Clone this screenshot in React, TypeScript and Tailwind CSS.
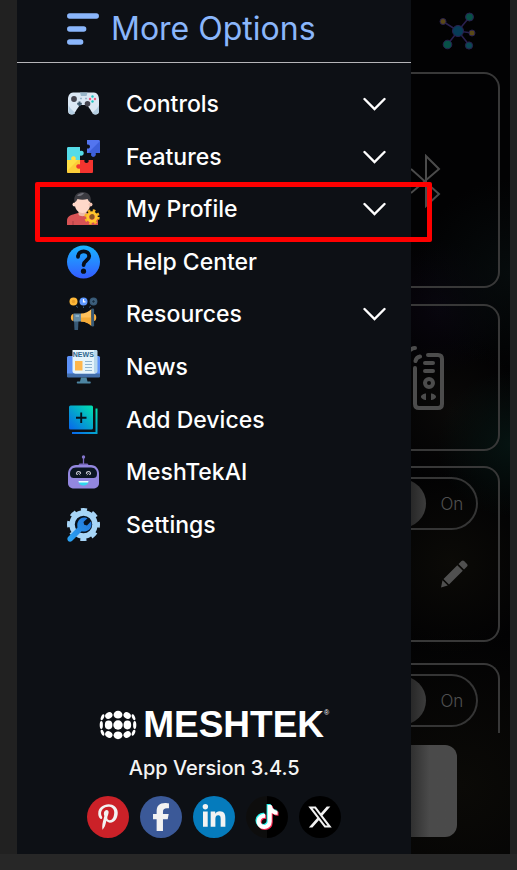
import type { ReactNode } from 'react';
import { FaFacebookF, FaLinkedinIn, FaPinterestP, FaTiktok, FaXTwitter } from 'react-icons/fa6';

const ControlsIcon = () => (
  <svg viewBox="0 0 35 34" className="h-[34px] w-[35px]" aria-hidden="true">
    <path d="M7 5.5h21c3 0 5 3 5 7v11c0 3-1.5 4-3.5 4-3 0-4-3.500-7-7.500-1-1.500-2-2-3-2h-4c-1 0-2 .5-3 2-3 4-4 7.500-7 7.500-2 0-3.500-1-3.500-4v-11c0-4 2-7 5-7Z" fill="#dbe8f4" />
    <path d="M2.500 18c2 5 4 4 6.500 8.500-1 .8-2 1-3 1-2 0-3.500-1-3.500-4ZM33 18c-2 5-4 4-6.500 8.500 1 .8 2 1 3 1 2 0 3.500-1 3.500-4Z" fill="#b4cee2" />
    <path d="M14 5.500h7.500l-1 3.500h-5.500Z" fill="#9bb8cc" />
    <circle cx="8" cy="12" r="2.900" fill="#45454f" />
    <circle cx="21.500" cy="16.700" r="2.800" fill="#45454f" />
    <path d="M13.500 14.500v4.600M11.200 16.800h4.600" stroke="#3f596d" strokeWidth="2" />
    <path d="M14 11.500h2M19 11.500h2" stroke="#96b4cc" strokeWidth="1.600" />
    <circle cx="26.500" cy="9.500" r="1.200" fill="#20c6c2" />
    <circle cx="26.500" cy="14.500" r="1.200" fill="#20c6c2" />
    <circle cx="24" cy="12" r="1.200" fill="#ef5b7c" />
    <circle cx="29" cy="12" r="1.200" fill="#ef5b7c" />
  </svg>
);

const FeaturesIcon = () => (
  <svg viewBox="0 0 35 34" className="h-[34px] w-[35px]" aria-hidden="true">
    <path d="M1 8.500c0-1 .5-1.500 1.500-1.500H14v4c5-2 5 6 0 4.500V20H1Z" fill="#55dce8" />
    <path d="M1 20h4.500c-2-5 6-5 4 0H14v13H2.500C1.500 33 1 32.500 1 31.500Z" fill="#ffe045" />
    <path d="M1 31 12 20h2v13H2.500C1.500 33 1 32.500 1 31.500Z" fill="#f9bd2e" opacity=".55" />
    <path d="M14 20h4.500c-1.500 4 5.500 4 4 0H27v11.500c0 1-.5 1.500-1.500 1.500H14v-4.500c-5 1.500-5-6 0-4Z" fill="#f4342f" />
    <path d="M21 0h11.500C33.500 0 34 .5 34 1.500V13h-4.500c1.500 5-6 5-4 0H21V8.500c4 1 4-5 0-4Z" fill="#5375ef" />
    <path d="M34 1v12h-4.500c1.500 5-6 5-4 0H22Z" fill="#3457d2" opacity=".7" />
  </svg>
);

const ProfileIcon = () => (
  <svg viewBox="0 0 35 34" className="h-[34px] w-[35px]" aria-hidden="true">
    <path d="M1 33v-4c0-4 3-6 6-6.500l5-1.500h9l5 1.500c4 .5 6 2.500 6 6.500v4Z" fill="#d75355" />
    <path d="M7 29v4M25 29v4" stroke="#a73d43" strokeWidth="1" />
    <path d="M12.500 17h8v5c0 3-8 3-8 0Z" fill="#eebba8" />
    <path d="M9 7h15v6c0 4-3 8-7.500 8S9 17 9 13Z" fill="#ffd8c9" />
    <circle cx="8.500" cy="12.500" r="2" fill="#ffd8c9" />
    <circle cx="24.500" cy="12.500" r="2" fill="#f3c4b3" />
    <path d="M8.500 10C7 4 11 0 16.500 0S26 4 24.500 10c-2 0-2-2-3-3-3 1-7 1-10 0-1 1-1 3-3 3Z" fill="#3b3b41" />
    <path d="M11 3.500c2-2 5-2.500 7-2.500-1 2-4 4-7 2.500Z" fill="#707078" />
    <circle cx="26" cy="25" r="6.300" fill="none" stroke="#f9b522" strokeWidth="2.800" strokeDasharray="2.500 2.450" />
    <circle cx="26" cy="25" r="4.300" fill="none" stroke="#ffc72e" strokeWidth="3" />
    <circle cx="26" cy="25" r="2.400" fill="#875622" />
  </svg>
);

const HelpIcon = () => (
  <svg viewBox="0 0 35 34" className="h-[34px] w-[35px]" aria-hidden="true">
    <defs>
      <linearGradient id="help" x1="0" x2="0" y1="0" y2="1">
        <stop stopColor="#18b5ff" />
        <stop offset="1" stopColor="#345bff" />
      </linearGradient>
    </defs>
    <circle cx="17.500" cy="17" r="16.500" fill="url(#help)" />
    <path d="M12 11.800c0-7.300 11.200-7 11.200-.5 0 4.200-5.600 4.400-5.600 8.700" fill="none" stroke="#080e18" strokeWidth="3.800" strokeLinecap="round" />
    <circle cx="17.500" cy="26.200" r="2.600" fill="#080e18" />
  </svg>
);

const ResourcesIcon = () => (
  <svg viewBox="0 0 35 34" className="h-[34px] w-[35px]" aria-hidden="true">
    <circle cx="7.500" cy="4.500" r="4" fill="#ffb939" />
    <circle cx="7.500" cy="4.500" r="1.700" fill="#eca028" />
    <circle cx="17.500" cy="4.500" r="4" fill="#5f98ff" />
    <path d="M17.500 2v2.800h2" fill="none" stroke="#fff" strokeWidth="1.200" />
    <circle cx="27.500" cy="4.500" r="3.900" fill="#385a77" />
    <circle cx="27.500" cy="4.500" r="1.700" fill="#172d41" stroke="#547996" strokeWidth=".7" />
    <path d="m10 9 2 1.500M17.500 9.500V11M25 9l-2 1.500" stroke="#385a77" />
    <path d="M8 24h4.500l-.5 9H8.500Z" fill="#385a77" />
    <path d="M7.500 17C4 17 4 24 7.500 24M28 17c3 0 3 7 0 7" fill="#ffb13d" />
    <path d="M15 16.500c4 0 8-2 10.500-4.500v17c-3-3-6-4.500-10.500-4.500Z" fill="#ffc15b" />
    <path d="M15 20.500h10.500V29c-3-3-6-4.500-10.500-4.500Z" fill="#f5ab37" />
    <path d="M7.500 16.500H15v8H7.500Z" fill="#648ba5" />
    <path d="M9.500 19h3.500" stroke="#b5d7e9" />
    <rect x="25.300" y="11.500" width="2.800" height="18" rx="1.200" fill="#385a77" />
  </svg>
);

const NewsIcon = () => (
  <svg viewBox="0 0 35 34" className="h-[34px] w-[35px]" aria-hidden="true">
    <rect x="1" y="6" width="33" height="21" rx="1.500" fill="#5c91f7" />
    <path d="M1 23.500h33V26c0 1-.5 1.500-1.500 1.500h-30C1.500 27.500 1 27 1 26Z" fill="#426eaa" />
    <path d="M15 27.500h5.500l1 4h2.500c1 0 1 2 0 2H11.500c-1 0-1-2 0-2H14Z" fill="#4d85a2" />
    <path d="M27 0h3c1 0 1.500.5 1.500 1.500V21c0 1.500-1 2.500-2.500 2.500H9Z" fill="#b8d8ec" />
    <path d="M6.500 0H28v21c0 1.500.5 2 1.500 2.500H9c-1.500 0-2.500-1-2.500-2.500Z" fill="#e5f4fb" />
    <text x="17.300" y="7" textAnchor="middle" fontFamily="Liberation Sans, sans-serif" fontWeight="700" fontSize="7" fill="#2d668e">NEWS</text>
    <rect x="9" y="11" width="7.500" height="9.500" fill="#ffb64c" />
    <path d="M19 11.500h7M19 14.500h7M19 17.500h7M19 20.500h7" stroke="#8fb3cf" strokeWidth="1" />
  </svg>
);

const AddDevicesIcon = () => (
  <svg viewBox="0 0 35 34" className="h-[34px] w-[35px]" aria-hidden="true">
    <defs>
      <linearGradient id="add" x1="0" x2="1" y1="1" y2="0">
        <stop stopColor="#0866ed" />
        <stop offset="1" stopColor="#00e3ae" />
      </linearGradient>
    </defs>
    <rect x="3" y="2.500" width="24" height="24" rx="1.500" fill="url(#add)" />
    <path d="M29.500 5.500h2V31H6v-2h23.500Z" fill="url(#add)" />
    <path d="M15.200 9.500v10.500M10 14.700h10.500" stroke="#07131c" strokeWidth="1.900" />
  </svg>
);

const RobotIcon = () => (
  <svg viewBox="0 0 35 34" className="h-[34px] w-[35px]" aria-hidden="true">
    <path d="M17.500 2v8" stroke="#7869bd" strokeWidth="1.300" />
    <circle cx="17.500" cy="2" r="1.700" fill="#8375ca" />
    <path d="M13.500 8.500h8l1.500 2H12Z" fill="#7869bd" />
    <path d="M10 10h15c5 0 8 4 8 9v9c0 4-3 5.500-6 5.500H8c-3 0-6-1.500-6-5.500v-9c0-5 3-9 8-9Z" fill="#9387df" />
    <path d="M10 12.500h15c4 0 6 3 6 6 0 4-2 4.500-4 4.500H8c-2 0-4-.5-4-4.500 0-3 2-6 6-6Z" fill="#0b1623" />
    <path d="M10.800 19.500a2 2 0 1 1 3.700-.7M20.500 18.800a2 2 0 1 1 3.700.7" fill="none" stroke="#c9c9d2" strokeWidth="1.200" />
    <path d="m11 20 1.500-1.500 1.700 1.500M20.800 20l1.700-1.500L24 20" fill="none" stroke="#c9c9d2" strokeWidth=".8" />
    <path d="M12.500 26h10c0 6-10 6-10 0Z" fill="#2ed7ee" />
    <path d="M12.500 26h10l-.4 1.600h-9.200Z" fill="#eefcff" />
  </svg>
);

const SettingsIcon = () => (
  <svg viewBox="0 0 35 34" className="h-[34px] w-[35px]" aria-hidden="true">
    <defs>
      <linearGradient id="wrench" x1="0" x2="1" y1="1" y2="0">
        <stop stopColor="#2ba5f5" />
        <stop offset="1" stopColor="#2373d9" />
      </linearGradient>
    </defs>
    <circle cx="17.500" cy="16.500" r="14.500" fill="none" stroke="#a7d5f7" strokeWidth="4" strokeDasharray="6 5.390" strokeDashoffset="3" />
    <circle cx="17.500" cy="16.500" r="11.500" fill="#08111d" stroke="#a7d5f7" strokeWidth="5.500" />
    <path d="m2 29 9.500-9.500c-1-5 1.500-9.500 6.500-10 1.500 0 2.500.2 3.500.8L17.500 14l.7 2.800L21 17.500l3.800-4c.6 1 .8 2 .7 3.500-.5 5-5 7.300-9.800 6.300L6 33c-3 2-6-1-4-4Z" fill="url(#wrench)" />
  </svg>
);

type MenuItem = { label: string; icon: ReactNode; expandable?: boolean; highlighted?: boolean };

const menuItems: MenuItem[] = [
  { label: 'Controls', icon: <ControlsIcon />, expandable: true },
  { label: 'Features', icon: <FeaturesIcon />, expandable: true },
  { label: 'My Profile', icon: <ProfileIcon />, expandable: true, highlighted: true },
  { label: 'Help Center', icon: <HelpIcon /> },
  { label: 'Resources', icon: <ResourcesIcon />, expandable: true },
  { label: 'News', icon: <NewsIcon /> },
  { label: 'Add Devices', icon: <AddDevicesIcon /> },
  { label: 'MeshTekAI', icon: <RobotIcon /> },
  { label: 'Settings', icon: <SettingsIcon /> },
];

const TikTokMark = () => (
  <span className="relative block h-6 w-6">
    <FaTiktok className="absolute -top-px -left-px h-6 w-6 text-[#25f4ee]" />
    <FaTiktok className="absolute top-px left-px h-6 w-6 text-[#fe2c55]" />
    <FaTiktok className="absolute top-0 left-0 h-6 w-6 text-white" />
  </span>
);

const socials = [
  { name: 'Pinterest', color: 'bg-[#cb2128]', icon: <FaPinterestP className="h-[26px] w-[26px]" /> },
  { name: 'Facebook', color: 'bg-[#3b5998]', icon: <FaFacebookF className="h-7 w-7" /> },
  { name: 'LinkedIn', color: 'bg-[#057bbc]', icon: <FaLinkedinIn className="h-[26px] w-[26px]" /> },
  { name: 'TikTok', color: 'bg-linear-to-r from-[#0d0d0d] from-50% to-black to-50%', icon: <TikTokMark /> },
  { name: 'X', color: 'bg-black', icon: <FaXTwitter className="h-[26px] w-[26px]" /> },
];

const GlobeLogo = () => (
  <svg viewBox="0 0 38 30" className="h-[30px] w-[38px]" fill="#fff" aria-hidden="true">
    <ellipse cx="19" cy="4.700" rx="4.400" ry="3.900" />
    <ellipse cx="19" cy="15" rx="4.700" ry="4.700" />
    <ellipse cx="19" cy="25.300" rx="4.400" ry="3.900" />
    <ellipse cx="9.800" cy="5.500" rx="3.800" ry="3.200" transform="rotate(-35 9.800 5.500)" />
    <ellipse cx="28.200" cy="5.500" rx="3.800" ry="3.200" transform="rotate(35 28.200 5.500)" />
    <ellipse cx="9.600" cy="15" rx="3.800" ry="4.400" />
    <ellipse cx="28.400" cy="15" rx="3.800" ry="4.400" />
    <ellipse cx="9.800" cy="24.500" rx="3.800" ry="3.200" transform="rotate(35 9.800 24.500)" />
    <ellipse cx="28.200" cy="24.500" rx="3.800" ry="3.200" transform="rotate(-35 28.200 24.500)" />
    <ellipse cx="3.500" cy="7.200" rx="1.500" ry="3.200" transform="rotate(22 3.500 7.200)" />
    <ellipse cx="34.500" cy="7.200" rx="1.500" ry="3.200" transform="rotate(-22 34.500 7.200)" />
    <ellipse cx="2.300" cy="15" rx="1.600" ry="4" />
    <ellipse cx="35.700" cy="15" rx="1.600" ry="4" />
    <ellipse cx="3.500" cy="22.800" rx="1.500" ry="3.200" transform="rotate(-22 3.500 22.800)" />
    <ellipse cx="34.500" cy="22.800" rx="1.500" ry="3.200" transform="rotate(22 34.500 22.800)" />
  </svg>
);

const Drawer = () => (
  <aside className="relative z-10 flex shrink-0 basis-4/5 flex-col bg-[#0d1015]">
    <header className="flex h-[63px] items-center gap-3 border-b border-[#b5b5b8] pb-[5px] pl-[50px]">
      <svg viewBox="0 0 32 34" className="h-[34px] w-8" stroke="#8ab6fb" strokeWidth="5.300" strokeLinecap="round" aria-hidden="true">
        <path d="M2.700 4h26.600M2.700 17h14M2.700 30h11" />
      </svg>
      <h1 className="text-[32px] leading-10 text-[#8ab6fb]">More Options</h1>
    </header>

    <nav className="flex-1 pt-[15px]">
      <ul className="grid h-[473px] auto-rows-fr">
        {menuItems.map(({ label, icon, expandable, highlighted }) => (
          <li key={label} className="relative flex">
            <button type="button" className="flex flex-1 items-center pr-[25px] pl-[49px] text-left">
              {icon}
              <span className="ml-[25px] flex-1 text-[23px] leading-8 font-medium text-white">{label}</span>
              {expandable && (
                <svg viewBox="0 0 23 14" className="h-[14px] w-[23px]" fill="none" stroke="#fff" strokeWidth="2.400" strokeLinecap="round" aria-hidden="true">
                  <path d="m1.500 2 10 10 10-10" />
                </svg>
              )}
            </button>
            {highlighted && (
              <span className="pointer-events-none absolute -top-px -right-[21px] -bottom-[6px] left-[18px] rounded-xs border-[5px] border-[#fe0000]" />
            )}
          </li>
        ))}
      </ul>
    </nav>

    <footer className="flex flex-col items-center pb-4">
      <div className="flex items-center gap-[6px]">
        <GlobeLogo />
        <div className="flex items-start font-['Liberation_Sans',sans-serif] text-white">
          <span className="text-[37px] leading-10 font-bold">MESHTEK</span>
          <span className="text-[7px] leading-4">®</span>
        </div>
      </div>
      <p className="mt-[9px] text-[20px] leading-7 font-medium text-[#f4f4f4]">App Version 3.4.5</p>
      <div className="mt-[14px] flex gap-[11px]">
        {socials.map(({ name, color, icon }) => (
          <a
            key={name}
            href="#"
            aria-label={name}
            className={`flex h-[42px] w-[42px] items-center justify-center rounded-full text-[#f2f2f2] ${color}`}
          >
            {icon}
          </a>
        ))}
      </div>
    </footer>
  </aside>
);

const MeshIcon = () => (
  <svg viewBox="0 0 40 40" className="h-10 w-10" aria-hidden="true">
    <path d="M5 10.500 20 20 31.500 6M34 22l-14-2-10.500 13.500M20 20l11.500 14.500" fill="none" stroke="#29204f" strokeWidth="1.600" />
    <g stroke="#29204f">
      <circle cx="20" cy="20" r="5.500" fill="#073c57" />
      <circle cx="5" cy="10.500" r="3" fill="#594817" />
      <circle cx="34" cy="22" r="3" fill="#594817" />
      <circle cx="31.500" cy="6" r="4" fill="#075047" />
      <circle cx="9.500" cy="33.500" r="4.300" fill="#075047" />
      <circle cx="31" cy="34.500" r="3.600" fill="#0b4853" />
    </g>
  </svg>
);

const PowerToggle = () => (
  <button
    type="button"
    role="switch"
    aria-checked="true"
    className="flex h-[53px] w-[67px] items-center overflow-hidden rounded-r-full border-2 border-l-0 border-[#353535] text-[17px] leading-6 font-light text-[#505050]"
  >
    <span className="-ml-[35px] h-[49px] w-[50px] shrink-0 rounded-full bg-linear-to-r from-[#222] from-60% to-[#3c3c3c]" />
    <span className="ml-[14px]">On</span>
  </button>
);

const cardStyle = 'mr-[10px] overflow-hidden border-2 border-l-0 border-[#383838]';

const Dashboard = () => (
  <main className="min-w-0 flex-1 bg-[#020203] bg-[radial-gradient(circle_at_100%_32%,#060b0c_0%,transparent_16%),radial-gradient(circle_at_30%_36%,#08050e_0%,transparent_12%),radial-gradient(circle_at_100%_52%,#061311_0%,transparent_16%),radial-gradient(circle_at_40%_48%,#0a0908_0%,transparent_16%),radial-gradient(circle_at_40%_66%,#0b0a07_0%,transparent_16%),radial-gradient(circle_at_50%_92%,#0b0a07_0%,transparent_20%)]">
    <div className="flex h-[72px] items-start pt-[11px] pl-[27px]">
      <MeshIcon />
    </div>
    <section className={`h-[216px] rounded-r-2xl ${cardStyle}`}>
      <svg viewBox="0 0 30 54" className="mt-[80px] h-[54px] w-[30px]" fill="none" stroke="#4b4b4b" strokeWidth="2" aria-hidden="true">
        <path d="m0 15 28 25-13 12V2l13 13L0 39" />
      </svg>
    </section>
    <section className={`mt-4 h-[147px] rounded-r-2xl ${cardStyle}`}>
      <svg viewBox="0 0 34 68" className="mt-[38px] h-[68px] w-[34px]" fill="none" stroke="#4c4c4c" strokeWidth="4" strokeLinecap="round" aria-hidden="true">
        <path d="M17 11h10c2.500 0 4 1.500 4 4v45c0 2.500-1.500 4-4 4H8c-2.500 0-4-1.500-4-4V24M4.500 17c.5-2.500 2-4 4.500-4.500M0 5.500c1-1 2-1.500 4-1.500" />
        <path d="M14 19h8M14 27h8" />
        <circle cx="18" cy="39" r="4" />
        <g fill="#4c4c4c" stroke="none">
          <path d="M15 49.500v6.500c-2 0-5-1.500-5-3.300s3-3.200 5-3.200ZM20 49.500v6.500c2 0 5-1.500 5-3.300s-3-3.200-5-3.200Z" />
        </g>
      </svg>
    </section>
    <section className={`mt-[15px] h-[176px] rounded-r-2xl pt-[9px] ${cardStyle}`}>
      <PowerToggle />
      <button type="button" aria-label="Edit" className="mt-[30px] ml-[29px] block">
        <svg viewBox="0 0 28 28" className="h-7 w-7" fill="#505050" aria-hidden="true">
          <path d="m18.500 4 3-3c.8-.8 1.800-.8 2.600 0L27 3.900c.8.800.8 1.800 0 2.600l-3 3ZM17.300 5.200l5.500 5.500L9 24.500 3.500 19ZM2.500 20.200l5.300 5.300L1 27.500Z" />
        </svg>
      </button>
    </section>
    <section className="mt-[21px] mr-[10px] h-[70px] overflow-hidden rounded-tr-2xl border-t-2 border-r-2 border-[#383838] pt-[9px]">
      <PowerToggle />
    </section>
    <div className="mt-3 h-[92px] w-[46px] rounded-r-xl bg-linear-to-r from-[#303030] to-[#4a4a4a] to-40%" />
  </main>
);

export default function App() {
  return (
    <div className="min-h-screen bg-[#272727] pb-4 font-['Inter','Noto_Sans',sans-serif]">
      <div className="flex min-h-[calc(100vh-16px)] bg-[#212121] pr-[7px] pl-[17px]">
        <Drawer />
        <Dashboard />
      </div>
    </div>
  );
}
